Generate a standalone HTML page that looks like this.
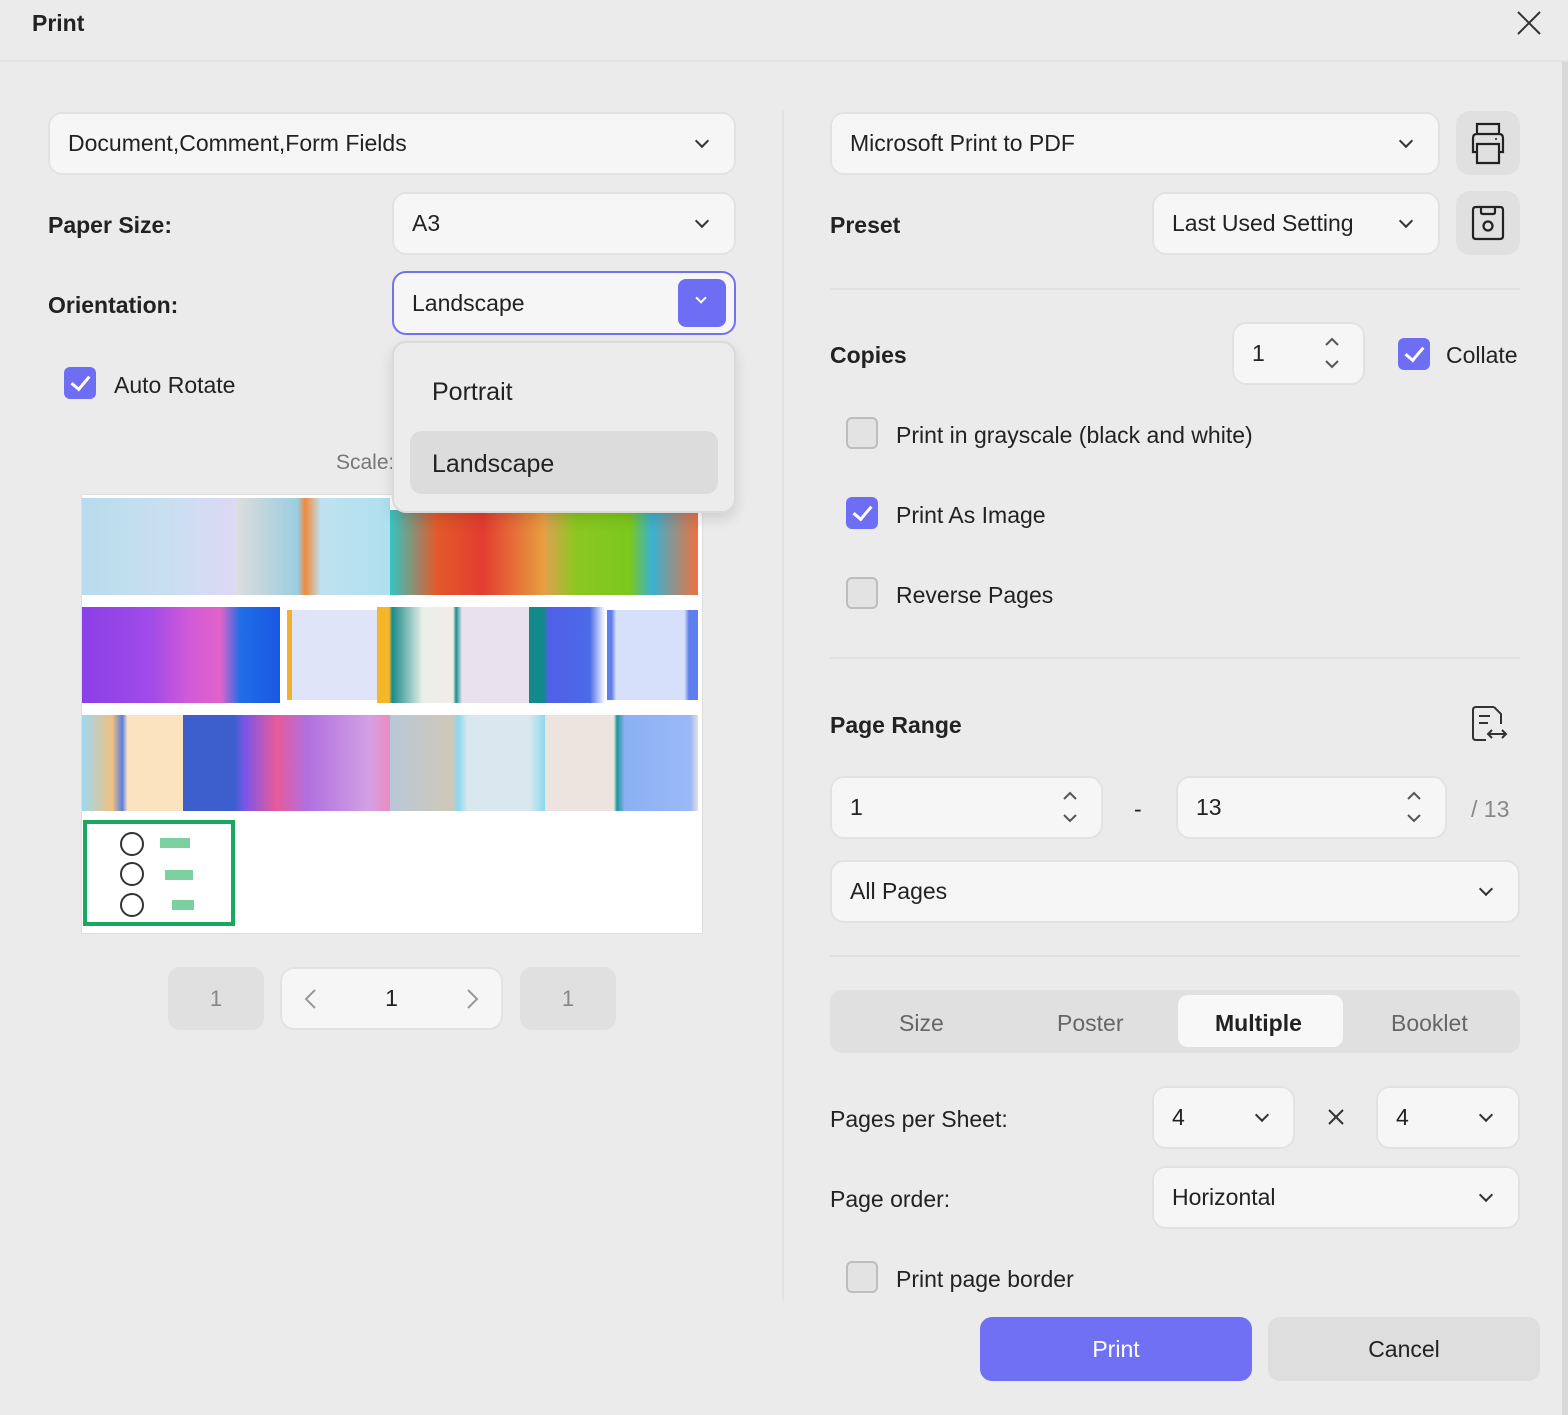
<!DOCTYPE html><html><head><meta charset="utf-8"><style>
*{box-sizing:border-box;margin:0;padding:0}
body{width:1568px;height:1415px;background:#ebebeb;font-family:"Liberation Sans",sans-serif;color:#222;position:relative;overflow:hidden}
.a{position:absolute}
.box{position:absolute;background:#f6f6f6;border:2px solid #e2e2e2;border-radius:14px;font-size:23px;display:flex;align-items:center;padding-left:18px}
.chev{position:absolute;width:10px;height:10px;border-right:2px solid #333;border-bottom:2px solid #333;transform:rotate(45deg)}
.lbl{position:absolute;font-size:23px;font-weight:bold;color:#222}
.t{position:absolute;font-size:23px;color:#222}
.cb{position:absolute;width:32px;height:32px;border-radius:6px;background:#6e6ef5}
.cb::after{content:"";position:absolute;left:11px;top:5px;width:8px;height:15px;border-right:3px solid #fff;border-bottom:3px solid #fff;transform:rotate(40deg)}
.cbo{position:absolute;width:32px;height:32px;border-radius:6px;background:#e3e3e3;border:2px solid #bdbdbd}
.hr{position:absolute;height:2px;background:#e0e0e0}
.tile{position:absolute}
</style></head><body>
<div class="a" style="left:0;top:0;width:1568px;height:62px;border-bottom:2px solid #e2e2e2"></div>
<div class="a" style="left:32px;top:10px;font-size:23px;font-weight:bold">Print</div>
<svg class="a" style="left:1515px;top:9px" width="28" height="28"><path d="M3 3L25 25M25 3L3 25" stroke="#333" stroke-width="2"/></svg>
<div class="a" style="left:1562px;top:62px;width:6px;height:1353px;background:#d8d8d8"></div>
<div class="a" style="left:782px;top:110px;width:2px;height:1190px;background:#e3e3e3"></div>

<div class="box" style="left:48px;top:112px;width:688px;height:63px">Document,Comment,Form Fields</div><div class="chev" style="left:697px;top:136px"></div>
<div class="lbl" style="left:48px;top:212px">Paper Size:</div>
<div class="box" style="left:392px;top:192px;width:344px;height:63px">A3</div><div class="chev" style="left:697px;top:216px"></div>
<div class="lbl" style="left:48px;top:292px">Orientation:</div>
<div class="box" style="left:392px;top:271px;width:344px;height:64px;border-color:#7272ee">Landscape</div>
<div class="a" style="left:678px;top:279px;width:48px;height:48px;background:#6e6ef5;border-radius:8px"></div><div class="chev" style="left:697px;top:294px;border-color:#fff;width:8px;height:8px"></div>
<div class="cb" style="left:64px;top:367px"></div><div class="t" style="left:114px;top:372px">Auto Rotate</div>
<div class="t" style="left:336px;top:451px;color:#777;font-size:21px">Scale:</div>

<div class="a" style="left:81px;top:494px;width:622px;height:440px;background:#fff;border:1px solid #ddd"></div>
<div class="tile" style="left:82px;top:498px;width:154px;height:97px;background:linear-gradient(90deg,#b8dced,#c9dff0 55%,#ddd8f5)"></div>
<div class="tile" style="left:236px;top:498px;width:154px;height:97px;background:linear-gradient(90deg,#ddd,#9ccde0 40%,#f08a3c 45%,#bfe1ef 55%,#aee0ef)"></div>
<div class="tile" style="left:390px;top:510px;width:155px;height:85px;background:linear-gradient(90deg,#35c4c0,#e35a2a 30%,#e33c30 60%,#e8a040)"></div>
<div class="tile" style="left:545px;top:510px;width:153px;height:85px;background:linear-gradient(90deg,#e0a050,#8bc820 20%,#7cc81c 55%,#3bb1d0 70%,#ee7040)"></div>
<div class="tile" style="left:82px;top:607px;width:198px;height:96px;background:linear-gradient(90deg,#8b3fe8,#a14be8 35%,#d35bd8 55%,#e062c9 70%,#1e6ee8 80%,#1a58e0)"></div>
<div class="tile" style="left:287px;top:610px;width:90px;height:90px;background:#e0e4f8;border-left:5px solid #f0b030"></div>
<div class="tile" style="left:377px;top:607px;width:152px;height:96px;background:linear-gradient(90deg,#f5b62a 8%,#1c8a8a 10%,#eaf0e8 30%,#f1ece6 50%,#1b9090 52%,#e8e2ee 56%,#e8e2ee)"></div>
<div class="tile" style="left:529px;top:607px;width:76px;height:96px;background:linear-gradient(90deg,#138a8a 20%,#5060e8 25%,#4b6ae8 80%,#fff)"></div>
<div class="tile" style="left:607px;top:610px;width:91px;height:90px;background:linear-gradient(90deg,#5f7ef0 5%,#d6e0fb 10%,#d6e0fb 85%,#5f7ef0 90%)"></div>
<div class="tile" style="left:82px;top:715px;width:101px;height:96px;background:linear-gradient(90deg,#9ed8f0,#f0c080 30%,#5a7ee0 40%,#fbe3c0 45%)"></div>
<div class="tile" style="left:183px;top:715px;width:207px;height:96px;background:linear-gradient(90deg,#3d5fce 25%,#7c55e8 30%,#e85a9a 45%,#b070e0 60%,#d3a0e4 90%,#ec8cc0)"></div>
<div class="tile" style="left:390px;top:715px;width:155px;height:96px;background:linear-gradient(90deg,#b8c8d8,#d0c8b8 40%,#8cd8f0 44%,#d8e8ee 50%,#d8e8ee 90%,#8cd8f0)"></div>
<div class="tile" style="left:545px;top:715px;width:153px;height:96px;background:linear-gradient(90deg,#ede4e0,#ede4e0 45%,#1a9898 47%,#8cb0f4 52%,#9ab8f6 95%,#e0e0e0)"></div>
<div class="tile" style="left:83px;top:820px;width:152px;height:106px;background:#fff;border:4px solid #18a860"></div>
<div class="tile" style="left:120px;top:832px;width:24px;height:24px;border:2px solid #333;border-radius:50%"></div>
<div class="tile" style="left:120px;top:862px;width:24px;height:24px;border:2px solid #333;border-radius:50%"></div>
<div class="tile" style="left:120px;top:893px;width:24px;height:24px;border:2px solid #333;border-radius:50%"></div>
<div class="tile" style="left:160px;top:838px;width:30px;height:10px;background:#7cd0a0"></div>
<div class="tile" style="left:165px;top:870px;width:28px;height:10px;background:#7cd0a0"></div>
<div class="tile" style="left:172px;top:900px;width:22px;height:10px;background:#7cd0a0"></div>

<div class="a" style="left:392px;top:341px;width:344px;height:172px;background:#ececec;border:2px solid #dadada;border-radius:14px;box-shadow:0 6px 14px rgba(0,0,0,.12)"></div>
<div class="t" style="left:432px;top:378px;font-size:25px">Portrait</div>
<div class="a" style="left:410px;top:431px;width:308px;height:63px;background:#dcdcdc;border-radius:12px"></div>
<div class="t" style="left:432px;top:450px;font-size:25px">Landscape</div>

<div class="a" style="left:168px;top:967px;width:96px;height:63px;background:#e0e0e0;border-radius:12px;font-size:22px;color:#888;text-align:center;line-height:63px">1</div>
<div class="box" style="left:280px;top:967px;width:223px;height:63px;justify-content:center;padding:0">1</div>
<svg class="a" style="left:303px;top:988px" width="16" height="22"><path d="M12 2L3 11L12 20" stroke="#999" stroke-width="2" fill="none"/></svg>
<svg class="a" style="left:464px;top:988px" width="16" height="22"><path d="M4 2L13 11L4 20" stroke="#999" stroke-width="2" fill="none"/></svg>
<div class="a" style="left:520px;top:967px;width:96px;height:63px;background:#e0e0e0;border-radius:12px;font-size:22px;color:#888;text-align:center;line-height:63px">1</div>

<!-- right -->
<div class="box" style="left:830px;top:112px;width:610px;height:63px">Microsoft Print to PDF</div><div class="chev" style="left:1401px;top:136px"></div>
<div class="a" style="left:1456px;top:111px;width:64px;height:64px;background:#e0e0e0;border-radius:14px"></div>
<svg class="a" style="left:1468px;top:121px" width="40" height="44"><path d="M9 13V3H31V13M9 31H5V17Q5 13 9 13H31Q35 13 35 17V31H31M9 23H31V42H9Z" stroke="#222" stroke-width="2.2" fill="none"/><circle cx="28" cy="18" r="1" fill="#222"/></svg>
<div class="lbl" style="left:830px;top:212px">Preset</div>
<div class="box" style="left:1152px;top:192px;width:288px;height:63px">Last Used Setting</div><div class="chev" style="left:1401px;top:216px"></div>
<div class="a" style="left:1456px;top:191px;width:64px;height:64px;background:#e0e0e0;border-radius:14px"></div>
<svg class="a" style="left:1470px;top:204px" width="36" height="38"><path d="M6 3H30Q33 3 33 6V32Q33 35 30 35H6Q3 35 3 32V6Q3 3 6 3ZM11 3V8Q11 10 13 10H23Q25 10 25 8V3" stroke="#222" stroke-width="2.2" fill="none"/><circle cx="18" cy="22" r="4.5" stroke="#222" stroke-width="2.2" fill="none"/></svg>
<div class="hr" style="left:830px;top:288px;width:690px"></div>
<div class="lbl" style="left:830px;top:342px">Copies</div>
<div class="box" style="left:1232px;top:322px;width:133px;height:63px">1</div>
<svg class="a" style="left:1323px;top:336px" width="18" height="34"><path d="M3 9L9 3L15 9M3 25L9 31L15 25" stroke="#555" stroke-width="2" fill="none"/></svg>
<div class="cb" style="left:1398px;top:338px"></div><div class="t" style="left:1446px;top:342px">Collate</div>
<div class="cbo" style="left:846px;top:417px"></div><div class="t" style="left:896px;top:422px">Print in grayscale (black and white)</div>
<div class="cb" style="left:846px;top:497px"></div><div class="t" style="left:896px;top:502px">Print As Image</div>
<div class="cbo" style="left:846px;top:577px"></div><div class="t" style="left:896px;top:582px">Reverse Pages</div>
<div class="hr" style="left:830px;top:657px;width:690px"></div>
<div class="lbl" style="left:830px;top:712px">Page Range</div>
<svg class="a" style="left:1470px;top:704px" width="40" height="40"><path d="M24 3H6Q3 3 3 6V33Q3 36 6 36H16M24 3L31 10V20M9 12H20M9 19H18M18 30H36M22 26L18 30L22 34M32 26L36 30L32 34" stroke="#333" stroke-width="2" fill="none"/></svg>
<div class="box" style="left:830px;top:776px;width:273px;height:63px">1</div>
<svg class="a" style="left:1061px;top:790px" width="18" height="34"><path d="M3 9L9 3L15 9M3 25L9 31L15 25" stroke="#555" stroke-width="2" fill="none"/></svg>
<div class="t" style="left:1134px;top:796px">-</div>
<div class="box" style="left:1176px;top:776px;width:271px;height:63px">13</div>
<svg class="a" style="left:1405px;top:790px" width="18" height="34"><path d="M3 9L9 3L15 9M3 25L9 31L15 25" stroke="#555" stroke-width="2" fill="none"/></svg>
<div class="t" style="left:1471px;top:796px;color:#888">/ 13</div>
<div class="box" style="left:830px;top:860px;width:690px;height:63px">All Pages</div><div class="chev" style="left:1481px;top:884px"></div>
<div class="hr" style="left:830px;top:955px;width:690px"></div>
<div class="a" style="left:830px;top:990px;width:690px;height:63px;background:#e0e0e0;border-radius:12px"></div>
<div class="a" style="left:1178px;top:995px;width:165px;height:52px;background:#f8f8f8;border-radius:10px"></div>
<div class="t" style="left:899px;top:1010px;color:#666">Size</div>
<div class="t" style="left:1057px;top:1010px;color:#666">Poster</div>
<div class="t" style="left:1215px;top:1010px;font-weight:bold">Multiple</div>
<div class="t" style="left:1391px;top:1010px;color:#666">Booklet</div>
<div class="t" style="left:830px;top:1106px">Pages per Sheet:</div>
<div class="box" style="left:1152px;top:1086px;width:143px;height:63px">4</div><div class="chev" style="left:1257px;top:1110px"></div>
<svg class="a" style="left:1327px;top:1108px" width="18" height="18"><path d="M2 2L16 16M16 2L2 16" stroke="#333" stroke-width="2"/></svg>
<div class="box" style="left:1376px;top:1086px;width:144px;height:63px">4</div><div class="chev" style="left:1481px;top:1110px"></div>
<div class="t" style="left:830px;top:1186px">Page order:</div>
<div class="box" style="left:1152px;top:1166px;width:368px;height:63px">Horizontal</div><div class="chev" style="left:1481px;top:1190px"></div>
<div class="cbo" style="left:846px;top:1261px"></div><div class="t" style="left:896px;top:1266px">Print page border</div>
<div class="a" style="left:980px;top:1317px;width:272px;height:64px;background:#7070f5;border-radius:12px;color:#fff;font-size:23px;text-align:center;line-height:64px">Print</div>
<div class="a" style="left:1268px;top:1317px;width:272px;height:64px;background:#dedede;border-radius:12px;font-size:23px;text-align:center;line-height:64px">Cancel</div>
</body></html>
